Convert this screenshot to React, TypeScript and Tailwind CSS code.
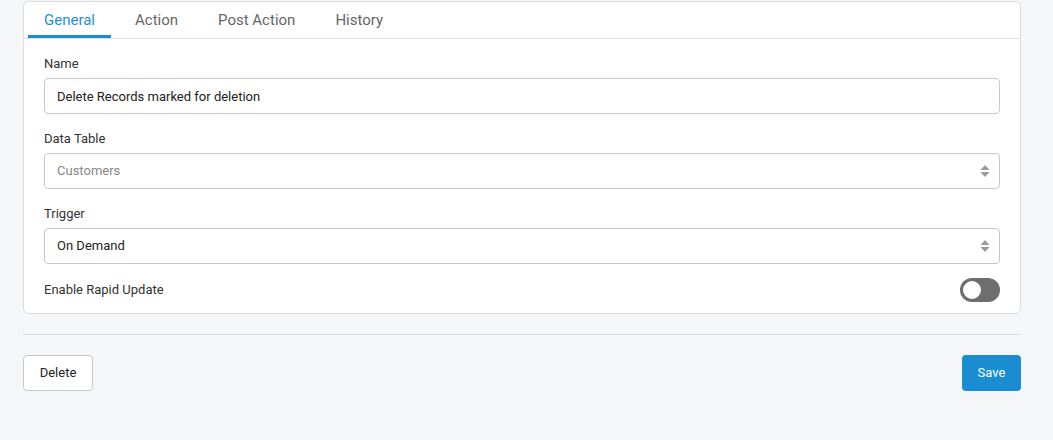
import { useState } from "react";

const TABS = ["General", "Action", "Post Action", "History"];

const SelectArrows = () => (
  <svg width="10" height="14" viewBox="0 0 10 14" className="absolute right-[10px] top-1/2 -translate-y-1/2">
    <path d="M5 1 L9.5 6 H0.5 Z" fill="#9a9a9a" />
    <path d="M5 13 L9.5 8 H0.5 Z" fill="#9a9a9a" />
  </svg>
);

const Field = ({ label, children }: { label: string; children: React.ReactNode }) => (
  <div className="flex flex-col">
    <label className="text-[13px] leading-4 text-[#333]">{label}</label>
    <div className="mt-[6px]">{children}</div>
  </div>
);

export default function App() {
  const [active, setActive] = useState("General");
  const [rapid, setRapid] = useState(false);

  return (
    <div
      className="min-h-[440px] w-full bg-[#f5f6f8] pl-[23px] pr-[32px] pt-px"
      style={{ fontFamily: "Roboto, 'Liberation Sans', sans-serif" }}
    >
      <div className="rounded-[6px] border border-[#dcdcdc] bg-white">
        {/* tabs */}
        <div className="flex h-[37px] gap-[8px] border-b border-[#dedede] pl-[4px]">
          {TABS.map((t) => (
            <button
              key={t}
              onClick={() => setActive(t)}
              className={
                t === active
                  ? "border-b-[3px] border-[#1a8cd2] px-[16px] pt-[3px] text-[15px] text-[#2391d6]"
                  : "border-b-[3px] border-transparent px-[16px] pt-[3px] text-[15px] text-[#666]"
              }
            >
              {t}
            </button>
          ))}
        </div>

        <div className="flex flex-col gap-[17px] px-5 pb-[11px] pt-[17px]">
          <Field label="Name">
            <input
              defaultValue="Delete Records marked for deletion"
              className="h-[36px] w-full rounded-[4px] border border-[#c8c8c8] px-3 text-[13px] text-[#222] outline-none"
            />
          </Field>

          <Field label="Data Table">
            <div className="relative">
              <div className="flex h-[36px] w-full items-center rounded-[4px] border border-[#c8c8c8] px-3 text-[13px] text-[#888]">
                Customers
              </div>
              <SelectArrows />
            </div>
          </Field>

          <Field label="Trigger">
            <div className="relative">
              <div className="flex h-[36px] w-full items-center rounded-[4px] border border-[#c8c8c8] px-3 text-[13px] text-[#222]">
                On Demand
              </div>
              <SelectArrows />
            </div>
          </Field>

          <div className="-mt-[3px] flex items-center justify-between">
            <span className="text-[13px] text-[#333]">Enable Rapid Update</span>
            <button
              onClick={() => setRapid(!rapid)}
              className={
                rapid
                  ? "flex h-[24px] w-[40px] items-center justify-end rounded-full bg-[#1a8cd2] px-[1px]"
                  : "flex h-[24px] w-[40px] items-center rounded-full bg-[#6e6e6e] px-[1px]"
              }
            >
              <span className="block h-[22px] w-[22px] rounded-full border-2 border-[#6e6e6e] bg-white" />
            </button>
          </div>
        </div>
      </div>

      <div className="mt-[20px] border-t border-[#dcdcdc]" />

      <div className="mt-[20px] flex justify-between">
        <button className="h-[36px] w-[70px] rounded-[4px] border border-[#c8c8c8] bg-white text-[13px] text-[#222]">
          Delete
        </button>
        <button className="h-[36px] w-[59px] rounded-[4px] bg-[#1a8cd2] text-[13px] text-white">
          Save
        </button>
      </div>
    </div>
  );
}
